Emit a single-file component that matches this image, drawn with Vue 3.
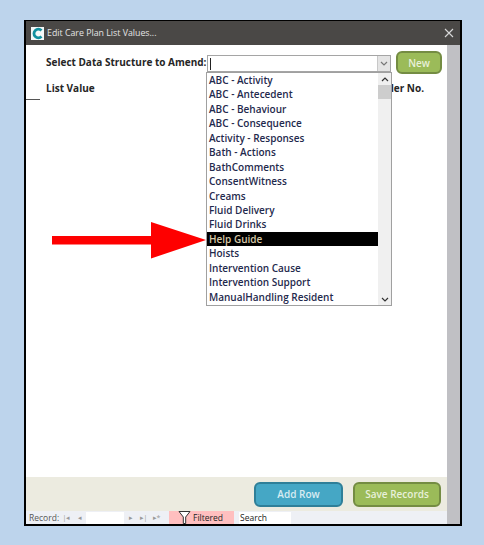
<template>
  <div class="page">
    <div class="window">
      <header class="titlebar">
        <svg class="logo" width="13" height="13" viewBox="0 0 13 13">
          <rect width="13" height="13" fill="#f4f8f8" />
          <path d="M10.5 3.4A4.4 4.4 0 1 0 10.5 9.6" fill="none" stroke="#12909f" stroke-width="2.8" />
        </svg>
        <span class="title">Edit Care Plan List Values...</span>
        <svg class="close" width="10" height="10" viewBox="0 0 10 10">
          <path d="M1 1L9 9M9 1L1 9" stroke="#d8d8d8" stroke-width="1.1" fill="none" />
        </svg>
      </header>

      <div class="body">
        <main class="content">
          <div class="select-row">
            <label class="select-label">Select Data Structure to Amend:</label>
            <div class="combo">
              <span class="caret"></span>
              <span class="combo-btn">
                <svg width="8" height="5" viewBox="0 0 8 5"><path d="M1 1L4 4L7 1" stroke="#777" stroke-width="1.2" fill="none" /></svg>
              </span>
            </div>
            <button class="btn btn-new">New</button>
          </div>

          <div class="columns">
            <span class="col-head">List Value</span>
            <span class="col-head">Order No.</span>
          </div>
          <div class="col-rule"></div>

          <!-- opened list sits over the column headers -->
          <div class="dropdown">
            <ul class="options">
              <li v-for="item in items" :key="item" :class="{ active: item === 'Help Guide' }">{{ item }}</li>
            </ul>
            <div class="scroll">
              <svg width="8" height="5" viewBox="0 0 8 5"><path d="M1 4L4 1L7 4" stroke="#333" stroke-width="1.2" fill="none" /></svg>
              <span class="thumb"></span>
              <svg class="down" width="8" height="5" viewBox="0 0 8 5"><path d="M1 1L4 4L7 1" stroke="#333" stroke-width="1.2" fill="none" /></svg>
            </div>
          </div>

          <svg class="arrow" width="156" height="37" viewBox="0 0 156 37">
            <path d="M0 14H99V0L154 18L99 36.5V22.5H0Z" fill="#fe0000" />
          </svg>
        </main>
        <aside class="strip"></aside>
      </div>

      <div class="footer">
        <button class="btn btn-add">Add Row</button>
        <button class="btn btn-save">Save Records</button>
      </div>

      <div class="statusbar">
        <span class="rec-label">Record:</span>
        <span class="nav">|◂</span>
        <span class="nav">◂</span>
        <span class="rec-input"></span>
        <span class="nav">▸</span>
        <span class="nav">▸|</span>
        <span class="nav">▸*</span>
        <span class="filtered">
          <svg width="13" height="13" viewBox="0 0 13 13">
            <path d="M1 .5H12L7.7 6V12.5H5.3V6Z" fill="#fff" stroke="#333" stroke-width="1" />
          </svg>
          Filtered
        </span>
        <span class="search">Search</span>
      </div>
    </div>
  </div>
</template>

<script setup>
const items = [
  'ABC - Activity',
  'ABC - Antecedent',
  'ABC - Behaviour',
  'ABC - Consequence',
  'Activity - Responses',
  'Bath - Actions',
  'BathComments',
  'ConsentWitness',
  'Creams',
  'Fluid Delivery',
  'Fluid Drinks',
  'Help Guide',
  'Hoists',
  'Intervention Cause',
  'Intervention Support',
  'ManualHandling Resident'
]
</script>

<style>
html, body {
  margin: 0;
  background: #bdd4ec;
}
</style>

<style scoped>
* {
  box-sizing: border-box;
}
.page {
  width: 484px;
  height: 545px;
  padding: 20px 22px 20px 24px;
  background: #bdd4ec;
  font-family: "Open Sans", "Liberation Sans", sans-serif;
}
.window {
  width: 438px;
  height: 506px;
  display: flex;
  flex-direction: column;
  border: 1px solid #000;
  border-width: 1px 2px 2px 2px;
  background: #fff;
}

/* title bar */
.titlebar {
  height: 24px;
  flex: none;
  display: flex;
  align-items: center;
  padding: 0 6px 0 5px;
  background: #4a4846;
}
.title {
  margin-left: 3px;
  font-size: 8.8px;
  color: #e4e4e4;
  white-space: nowrap;
}
.close {
  margin-left: auto;
}

.body {
  flex: 1;
  display: flex;
  min-height: 0;
}
.content {
  flex: 1;
  position: relative;
  background: #fff;
}
.strip {
  width: 13px;
  background: #c0c0c4;
}

.select-row {
  display: flex;
  align-items: flex-start;
  padding: 10px 0 0 20px;
  height: 36px;
}
.select-label {
  width: 161px;
  font-size: 10px;
  font-weight: 700;
  color: #262626;
  white-space: nowrap;
}
.combo {
  width: 184px;
  height: 17px;
  display: flex;
  justify-content: space-between;
  border: 1px solid #a5a5a5;
  background: #fff;
}
.caret {
  width: 1px;
  height: 12px;
  margin: 2px 0 0 2px;
  background: #222;
}
.combo-btn {
  width: 13px;
  display: flex;
  align-items: center;
  justify-content: center;
  background: #e4e4e4;
  border-left: 1px solid #c8c8c8;
}
.btn {
  border-radius: 6px;
  font-family: inherit;
  font-size: 10px;
  font-weight: 600;
  color: #e8f0da;
  padding: 0;
}
.btn-new {
  width: 46px;
  height: 23px;
  margin: -4px 0 0 5px;
  background: #9bbb59;
  border: 2px solid #748c43;
}

.columns {
  display: flex;
  justify-content: space-between;
  padding: 0 23px 0 20px;
  height: 18px;
}
.col-head {
  font-size: 10px;
  font-weight: 700;
  color: #262626;
}
.col-rule {
  width: 14px;
  height: 1px;
  background: #555;
}

.dropdown {
  position: absolute;
  left: 180px;
  top: 27px;
  width: 186px;
  height: 234px;
  display: flex;
  border: 1px solid #a0a0a0;
  background: #fff;
}
.options {
  flex: 1;
  margin: 0;
  padding: 0;
  list-style: none;
  font-size: 10px;
  font-weight: 600;
  color: #1f2a4d;
}
.options li {
  height: 14.45px;
  line-height: 14.45px;
  padding-left: 2px;
  white-space: nowrap;
}
.options li.active {
  background: #000;
  color: #d8c9a8;
}
.scroll {
  width: 13px;
  display: flex;
  flex-direction: column;
  align-items: center;
  padding-top: 4px;
  background: #f0f0f0;
}
.thumb {
  width: 13px;
  height: 14px;
  margin-top: 3px;
  background: #cdcdcd;
}
.scroll .down {
  margin-top: auto;
  margin-bottom: 3px;
}

.arrow {
  position: absolute;
  left: 26px;
  top: 177px;
}

/* footer with action buttons */
.footer {
  flex: none;
  height: 34px;
  display: flex;
  justify-content: flex-end;
  align-items: center;
  gap: 10px;
  padding: 0 6px 0 0;
  background: #ecebe0;
  border-right: 13px solid #c0c0c4;
}
.btn-add {
  width: 89px;
  height: 25px;
  background: #45a7c5;
  border: 2px solid #2f7f98;
  color: #d8ecf2;
}
.btn-save {
  width: 88px;
  height: 25px;
  background: #9bbb59;
  border: 2px solid #748c43;
}

/* record navigation bar */
.statusbar {
  flex: none;
  height: 13px;
  display: flex;
  align-items: center;
  font-size: 8.5px;
  background: #eef0f5;
  color: #555;
  border-right: 13px solid #c0c0c4;
  white-space: nowrap;
}
.rec-label {
  width: 34px;
  padding-left: 3px;
  flex: none;
}
.nav {
  width: 13px;
  font-size: 7px;
  color: #999;
  text-align: center;
  flex: none;
}
.rec-input {
  width: 38px;
  height: 12px;
  background: #fff;
  flex: none;
}
.filtered {
  width: 65px;
  height: 13px;
  margin-left: 6px;
  display: flex;
  align-items: center;
  gap: 2px;
  padding-left: 9px;
  background: #ffbfbf;
  color: #222;
  flex: none;
}
.search {
  width: 52px;
  height: 12px;
  margin-left: 5px;
  padding-left: 1px;
  background: #fff;
  color: #222;
  line-height: 12px;
  flex: none;
}
</style>
